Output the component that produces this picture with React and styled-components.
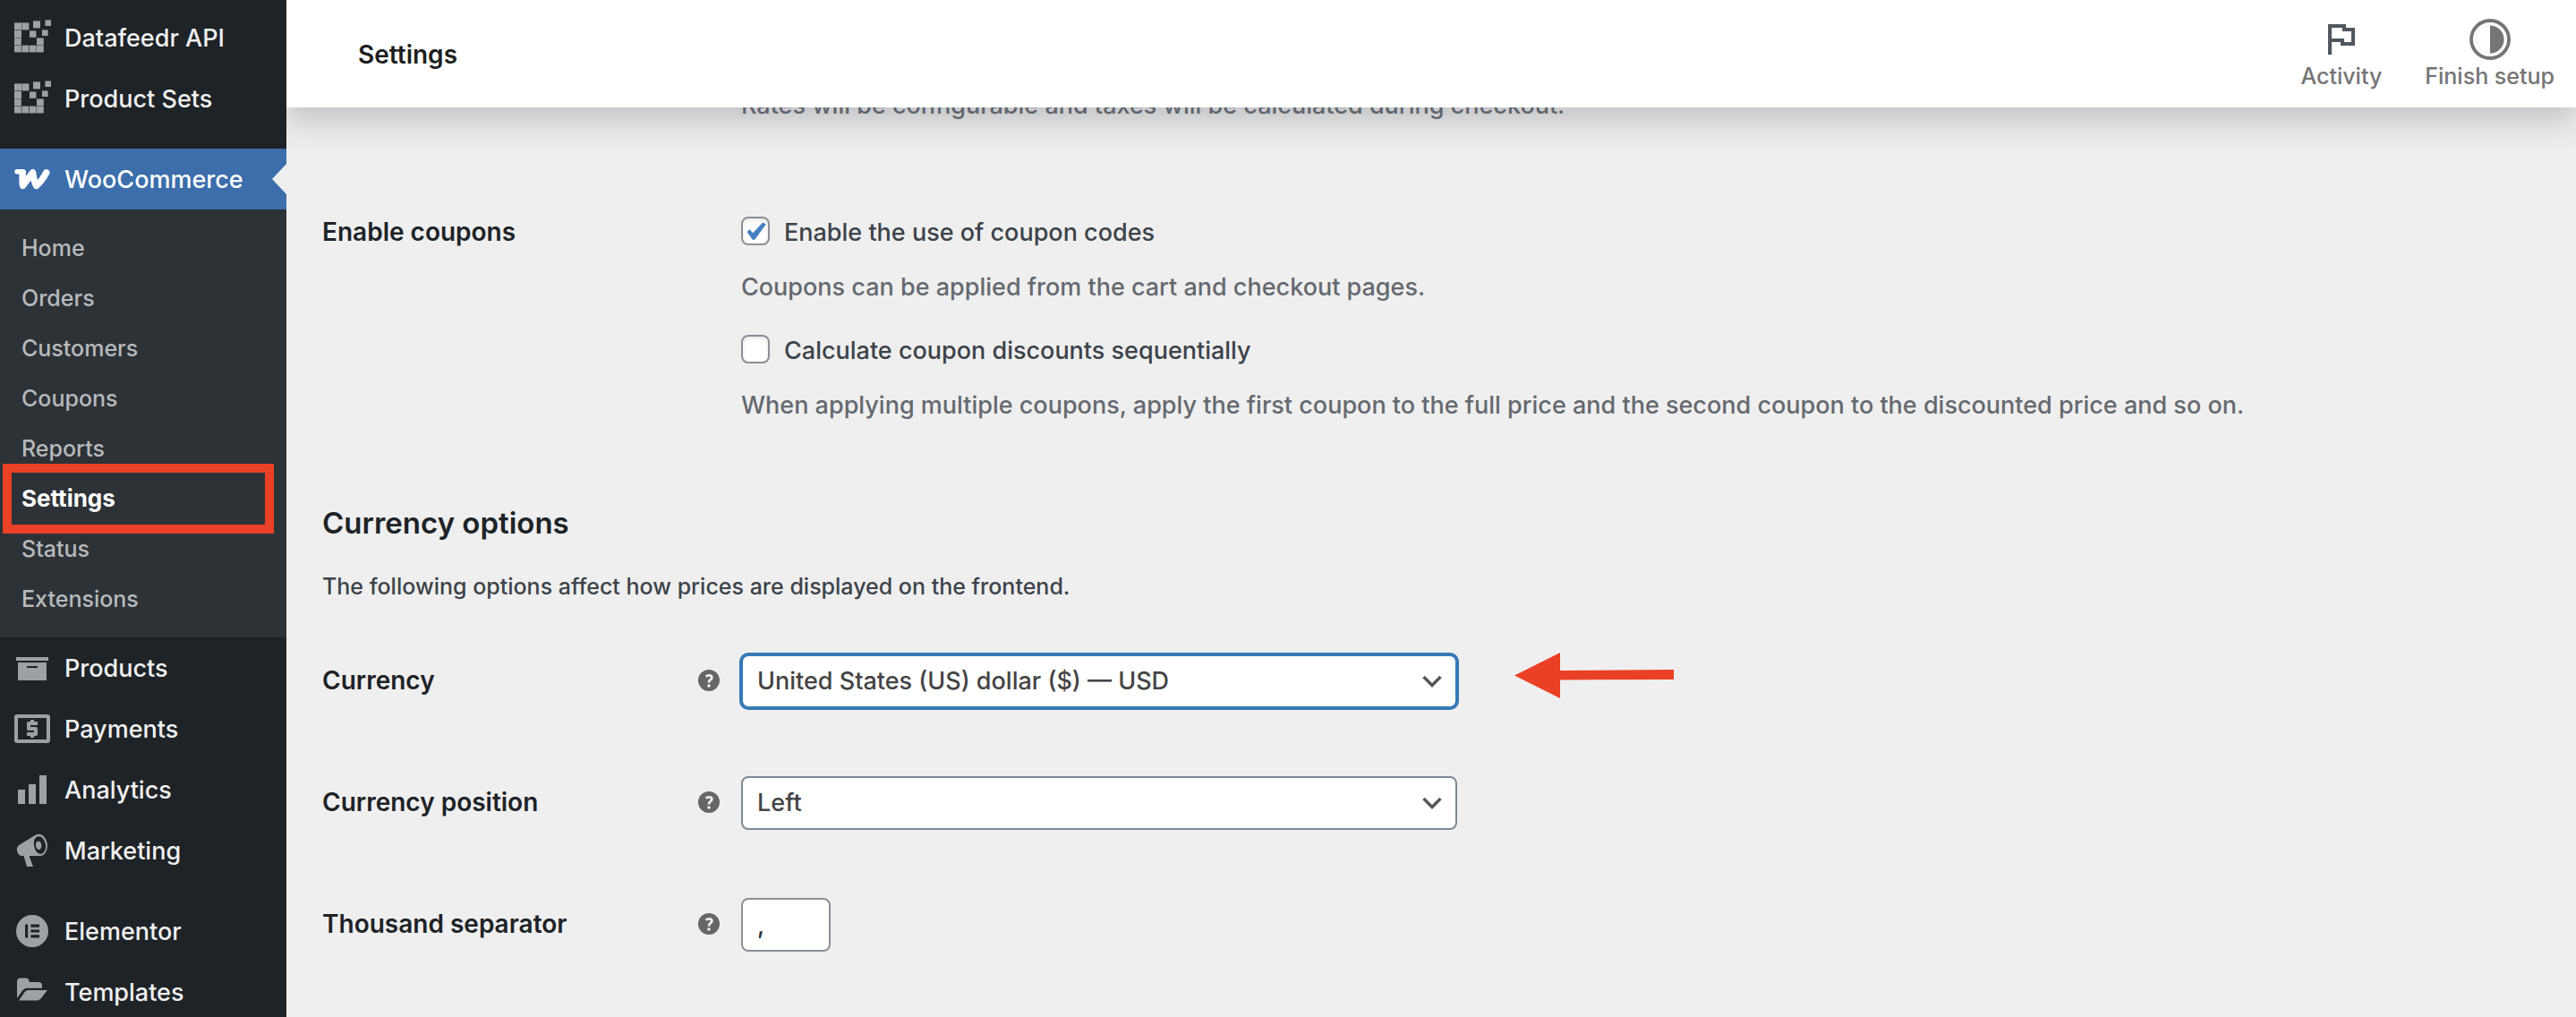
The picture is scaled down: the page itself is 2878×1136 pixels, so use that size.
import React from "react";
import styled, { createGlobalStyle, css } from "styled-components";

const color = {
  page: "#efefef",
  menu: "#1e2327",
  submenu: "#2d3237",
  active: "#3b6eab",
  icon: "#9ca1a6",
  heading: "#1d2327",
  body: "#3c434a",
  muted: "#646970",
  accent: "#367ab6",
  callout: "#ea4025",
};

const GlobalStyle = createGlobalStyle`
  *, *::before, *::after { box-sizing: border-box; }
  html, body { margin: 0; overflow: hidden; }
  body {
    background: ${color.page};
    color: ${color.body};
    font-family: Inter, "Liberation Sans", sans-serif;
    font-size: 27px;
    font-weight: 450;
    line-height: 36px;
  }
  button, input, select { font: inherit; color: inherit; margin: 0; }
`;

const Layout = styled.div`
  display: flex;
  height: 100vh;
  overflow: hidden;
`;

/* ---------- Admin menu ---------- */

const Sidebar = styled.nav`
  flex: 0 0 320px;
  z-index: 3;
  overflow: hidden;
  background: ${color.menu};
`;

const MenuList = styled.ul`
  list-style: none;
  margin: 0;
  padding: 8px 0 0;
`;

const MenuItem = styled.li`
  margin-top: ${(p) => (p.$separated ? "22px" : "0")};
`;

const MenuLink = styled.a`
  position: relative;
  display: flex;
  align-items: center;
  gap: 16px;
  height: 68px;
  padding-left: 16px;
  color: ${(p) => (p.$active ? "#fff" : "#f0f0f1")};
  background: ${(p) => (p.$active ? color.active : "transparent")};
  text-decoration: none;

  svg {
    flex: none;
    fill: ${(p) => (p.$active ? "#fff" : color.icon)};
  }

  ${(p) =>
    p.$active &&
    css`
      &::after {
        content: "";
        position: absolute;
        right: 0;
        top: 17px;
        border: 17px solid transparent;
        border-left-width: 0;
        border-right: 16px solid ${color.page};
      }
    `}
`;

const MenuText = styled.span`
  padding-top: 2px;
`;

const Submenu = styled.ul`
  list-style: none;
  margin: 0;
  padding: 14px 0 16px;
  background: ${color.submenu};
`;

const SubmenuItem = styled.li`
  position: relative;
`;

const SubmenuLink = styled.a`
  display: block;
  padding: 2px 0 0 24px;
  font-size: ${(p) => (p.$current ? "26px" : "25px")};
  line-height: 54px;
  font-weight: ${(p) => (p.$current ? 650 : 450)};
  color: ${(p) => (p.$current ? "#fff" : "#b7babd")};
  text-decoration: none;
`;

const Highlight = styled.span`
  position: absolute;
  inset: -10px 14px -12px 3px;
  border: 10px solid ${color.callout};
  pointer-events: none;
`;

/* ---------- Header ---------- */

const Main = styled.main`
  flex: 1;
  min-width: 0;
`;

const Header = styled.header`
  position: sticky;
  top: 0;
  z-index: 2;
  display: flex;
  align-items: center;
  justify-content: space-between;
  height: 120px;
  padding-left: 80px;
  background: #fff;
  box-shadow: 0 16px 32px rgba(85, 93, 102, 0.3);
`;

const Title = styled.h1`
  margin: 0;
  padding-top: 2px;
  font-size: 28px;
  font-weight: 600;
  color: #1e1e1e;
`;

const Tabs = styled.div`
  display: flex;
`;

const TabButton = styled.button`
  display: flex;
  flex-direction: column;
  align-items: center;
  padding: 2px 24px 0;
  border: 0;
  background: none;
  color: #757575;
  font-size: 25px;
  line-height: 32px;
`;

/* ---------- Settings form ---------- */

const Form = styled.form`
  display: flex;
  flex-direction: column;
  margin-top: -23px;
  padding: 0 40px;
`;

const Row = styled.div`
  display: grid;
  grid-template-columns: 444px 1fr;
  column-gap: 24px;
  margin-top: ${(p) => p.$space || 0}px;
`;

const LabelCell = styled.div`
  display: flex;
  align-items: center;
  justify-content: space-between;
  align-self: start;
  padding-top: ${(p) => (p.$field ? "11px" : "0")};
  font-size: 28px;
  font-weight: 600;
  color: ${color.heading};
`;

const Options = styled.div`
  display: flex;
  flex-direction: column;
  gap: 32px;
  padding-top: 1px;
`;

const CheckLabel = styled.label`
  display: flex;
  align-items: flex-start;
  gap: 16px;
`;

const CheckBoxCell = styled.span`
  display: grid;
  width: 32px;
  height: 32px;

  > * {
    grid-area: 1 / 1;
  }

  svg {
    pointer-events: none;
  }
`;

const CheckBox = styled.input`
  appearance: none;
  width: 32px;
  height: 32px;
  border: 2px solid #8c8f94;
  border-radius: 8px;
  background: #fff;
  box-shadow: inset 0 2px 4px rgba(0, 0, 0, 0.1);

  & + svg {
    visibility: hidden;
  }
  &:checked + svg {
    visibility: visible;
  }
`;

const Description = styled.p`
  margin: ${(p) => (p.$spaced ? "22px" : "0")} 0 0;
  line-height: 42px;
  color: ${color.muted};
`;

const SectionTitle = styled.h2`
  margin: 88px 0 0;
  font-size: 33px;
  line-height: 44px;
  font-weight: 600;
  color: ${color.heading};
`;

const SectionText = styled.p`
  margin: 29px 0 0;
  font-size: 25px;
  line-height: 40px;
`;

const HelpTip = styled.button`
  display: block;
  padding: 0;
  border: 0;
  background: none;
  line-height: 0;
`;

const Field = styled.div`
  display: flex;
  gap: 64px;
`;

const SelectBox = styled.div`
  display: grid;
  width: 800px;

  > * {
    grid-area: 1 / 1;
  }

  svg {
    place-self: center end;
    margin-right: 16px;
    pointer-events: none;
  }
`;

const fieldStyle = css`
  height: 60px;
  border: 2px solid #8c8f94;
  border-radius: 8px;
  background: #fff;
`;

const Select = styled.select`
  ${fieldStyle}
  appearance: none;
  width: 100%;
  padding: 0 52px 0 16px;
  color: #444;
  border-color: ${(p) => (p.$focused ? color.accent : "#7e8993")};
  box-shadow: ${(p) => (p.$focused ? `0 0 0 2px ${color.accent}` : "none")};
`;

const TextInput = styled.input`
  ${fieldStyle}
  width: 100px;
  padding: 0 16px;
  color: #2c3338;
`;

/* ---------- Icons ---------- */

const MenuIcon = ({ children }) => (
  <svg width="40" height="40" viewBox="0 0 40 40" aria-hidden="true">
    {children}
  </svg>
);

const datafeedrSquares = [
  [0, 11, 8], [8.4, 11, 8], [21, 9, 8], [34.4, 8, 6.6],
  [0, 19.6, 8], [17, 20, 7.4], [31, 19, 6.6],
  [0, 28, 7.8], [25, 28, 7.8],
  [0, 36.2, 7.8], [8.4, 36.2, 7.8], [16.8, 36.2, 7.8], [25, 36.2, 7.8],
];

const DatafeedrIcon = () => (
  <svg width="40" height="48" viewBox="0 0 40 48" overflow="visible" aria-hidden="true">
    <g transform="translate(0 -4)">
      {datafeedrSquares.map(([x, y, s]) => (
        <rect key={`${x}-${y}`} x={x} y={y + 0.4} width={s} height={s} />
      ))}
    </g>
  </svg>
);

const WooIcon = () => (
  <MenuIcon>
    <g fill="none" stroke="#fff" strokeLinecap="round" strokeLinejoin="round">
      <path d="M3 11.8H9" strokeWidth="5.4" />
      <path d="M9.4 12.6Q8.6 22 9.6 27.4L20.6 12.6Q21.6 22 24.6 27.4Q31 22 35.8 12.8" strokeWidth="7.4" />
    </g>
  </MenuIcon>
);

const ProductsIcon = () => (
  <MenuIcon>
    <path d="M2 8h36v4H2zM4 14h32v20H4zM14 18v2h12v-2z" fillRule="evenodd" />
  </MenuIcon>
);

const PaymentsIcon = () => (
  <MenuIcon>
    <path
      d="M3 4h34a3 3 0 0 1 3 3v26a3 3 0 0 1-3 3H3a3 3 0 0 1-3-3V7a3 3 0 0 1 3-3zM4 8v24h32V8z"
      fillRule="evenodd"
    />
    <path d="M18 10h4v2h4v4h-8v2h6a2 2 0 0 1 2 2v6a2 2 0 0 1-2 2h-2v2h-4v-2h-4v-4h8v-2h-6a2 2 0 0 1-2-2v-6a2 2 0 0 1 2-2h2z" />
  </MenuIcon>
);

const AnalyticsIcon = () => (
  <MenuIcon>
    <path d="M4 20h8v16H4zM16 14h8v22h-8zM28 4h8v32h-8z" />
  </MenuIcon>
);

const MarketingIcon = () => (
  <MenuIcon>
    <path
      fillRule="evenodd"
      d="M24 2.6C30-.4 35.4 5 36.7 12C37.8 19 34.500 25.600 29 26H8.400C4 25.600 2.600 21 3 17.600Q3.400 15 6 13.600zM25.600 4.600C21.500 6.500 21.200 12 22.600 17C24 22 27.500 25 31 23.400C35 21.500 35.800 16.500 34.600 12C33.200 7 29.500 3 25.600 4.600zM26.400 9.700C28.600 9 30.200 11.600 30.300 14.500C30.300 17 29.500 18.800 27.800 19C25.600 19.200 24.200 17 24 14.500C23.800 12 24.600 10.200 26.400 9.700zM10.500 26H16.500L21 38H14z"
    />
  </MenuIcon>
);

const ElementorIcon = () => (
  <MenuIcon>
    <path
      fillRule="evenodd"
      d="M20 2a18 18 0 1 0 0 36 18 18 0 0 0 0-36zM12 12.500h3.200v15H12zM18.400 12.500H28v3.200h-9.600zM18.400 18.400H28v3.200h-9.600zM18.400 24.300H28v3.200h-9.600z"
    />
  </MenuIcon>
);

const TemplatesIcon = () => (
  <MenuIcon>
    <path d="M3 28V8.500Q3 4.500 7 4.500H12.500Q16.600 4.500 16.800 9H27Q31 9 31 13V15.800H14.500Q10.600 16 8.400 19.600Q5.500 24 3 27z" />
    <path d="M15 18H36.800L30.500 26.500Q28.200 29.600 24.500 29.600H5L11 21Q12.800 18 15 18z" />
  </MenuIcon>
);

const FlagIcon = () => (
  <svg width="48" height="48" viewBox="0 0 48 48" aria-hidden="true">
    <path d="M11 40V8H27V12H37V28H25V24H11" fill="none" stroke="#50575e" strokeWidth="4" />
  </svg>
);

const SetupIcon = () => (
  <svg width="48" height="48" viewBox="0 0 48 48" aria-hidden="true">
    <circle cx="24" cy="23" r="21" fill="none" stroke="#757575" strokeWidth="3.800" />
    <circle cx="24" cy="23" r="15.500" fill="none" stroke="#eee" strokeWidth="1" />
    <path d="M24 7.500a15.500 15.500 0 0 1 0 31z" fill="#757575" />
  </svg>
);

const CheckIcon = () => (
  <svg width="32" height="32" viewBox="0 0 32 32" aria-hidden="true">
    <path d="M6.500 17L9.500 14.200L13.200 18.200L24.200 6.500L27.800 8.600L16 24.800Q13.800 27.200 12 24.800z" fill="#4680c2" />
  </svg>
);

const HelpIcon = () => (
  <svg width="24" height="24" viewBox="0 0 24 24" aria-hidden="true">
    <circle cx="12" cy="12" r="12" fill="#666" />
    <path d="M8.600 7.600Q10.200 6.300 12.200 6.300Q15.300 6.300 15.300 8.800Q15.300 10.300 13.500 11.400Q12 12.400 12 14.400" fill="none" stroke="#efefef" strokeWidth="2.800" />
    <circle cx="12" cy="18" r="1.800" fill="#efefef" />
  </svg>
);

const ChevronIcon = () => (
  <svg width="24" height="24" viewBox="0 0 24 24" aria-hidden="true">
    <path d="M2.500 7L12 16.500L21.500 7" fill="none" stroke="#555" strokeWidth="3.400" />
  </svg>
);

const CalloutArrow = () => (
  <svg width="178" height="60" viewBox="0 0 178 60" overflow="visible" aria-hidden="true">
    <path d="M0 23.500L51 -2V18L178 17V28L51 28.500V49z" fill={color.callout} />
  </svg>
);

/* ---------- Content ---------- */

const menu = [
  { label: "Datafeedr API", Icon: DatafeedrIcon },
  { label: "Product Sets", Icon: DatafeedrIcon },
  {
    label: "WooCommerce",
    Icon: WooIcon,
    active: true,
    separated: true,
    children: ["Home", "Orders", "Customers", "Coupons", "Reports", "Settings", "Status", "Extensions"],
  },
  { label: "Products", Icon: ProductsIcon },
  { label: "Payments", Icon: PaymentsIcon },
  { label: "Analytics", Icon: AnalyticsIcon },
  { label: "Marketing", Icon: MarketingIcon },
  { label: "Elementor", Icon: ElementorIcon, separated: true },
  { label: "Templates", Icon: TemplatesIcon },
];

const CheckOption = ({ label, description, checked }) => (
  <div>
    <CheckLabel>
      <CheckBoxCell>
        <CheckBox type="checkbox" defaultChecked={checked} />
        <CheckIcon />
      </CheckBoxCell>
      {label}
    </CheckLabel>
    <Description $spaced>{description}</Description>
  </div>
);

const FieldRow = ({ id, label, space, children }) => (
  <Row $space={space}>
    <LabelCell $field>
      <label htmlFor={id}>{label}</label>
      <HelpTip type="button" aria-label={`Help: ${label}`}>
        <HelpIcon />
      </HelpTip>
    </LabelCell>
    <Field>{children}</Field>
  </Row>
);

const SelectField = ({ id, value, focused }) => (
  <SelectBox>
    <Select id={id} $focused={focused} defaultValue={value}>
      <option>{value}</option>
    </Select>
    <ChevronIcon />
  </SelectBox>
);

export default function App() {
  return (
    <>
      <GlobalStyle />
      <Layout>
        <Sidebar aria-label="Main menu">
          <MenuList>
            {menu.map(({ label, Icon, active, separated, children }) => (
              <MenuItem key={label} $separated={separated}>
                <MenuLink href="#" $active={active}>
                  <Icon />
                  <MenuText>{label}</MenuText>
                </MenuLink>
                {children && (
                  <Submenu>
                    {children.map((name) => (
                      <SubmenuItem key={name}>
                        <SubmenuLink href="#" $current={name === "Settings"}>
                          {name}
                        </SubmenuLink>
                        {name === "Settings" && <Highlight />}
                      </SubmenuItem>
                    ))}
                  </Submenu>
                )}
              </MenuItem>
            ))}
          </MenuList>
        </Sidebar>

        <Main>
          <Header>
            <Title>Settings</Title>
            <Tabs>
              <TabButton type="button">
                <FlagIcon />
                Activity
              </TabButton>
              <TabButton type="button">
                <SetupIcon />
                Finish setup
              </TabButton>
            </Tabs>
          </Header>

          <Form>
            <Row>
              <LabelCell />
              <Description>Rates will be configurable and taxes will be calculated during checkout.</Description>
            </Row>

            <Row $space={102}>
              <LabelCell>Enable coupons</LabelCell>
              <Options>
                <CheckOption
                  checked
                  label="Enable the use of coupon codes"
                  description="Coupons can be applied from the cart and checkout pages."
                />
                <CheckOption
                  label="Calculate coupon discounts sequentially"
                  description="When applying multiple coupons, apply the first coupon to the full price and the second coupon to the discounted price and so on."
                />
              </Options>
            </Row>

            <SectionTitle>Currency options</SectionTitle>
            <SectionText>The following options affect how prices are displayed on the frontend.</SectionText>

            <FieldRow id="currency" label="Currency" space={56}>
              <SelectField id="currency" value="United States (US) dollar ($) — USD" focused />
              <CalloutArrow />
            </FieldRow>
            <FieldRow id="position" label="Currency position" space={76}>
              <SelectField id="position" value="Left" />
            </FieldRow>
            <FieldRow id="thousand" label="Thousand separator" space={76}>
              <TextInput id="thousand" type="text" defaultValue="," />
            </FieldRow>
          </Form>
        </Main>
      </Layout>
    </>
  );
}
